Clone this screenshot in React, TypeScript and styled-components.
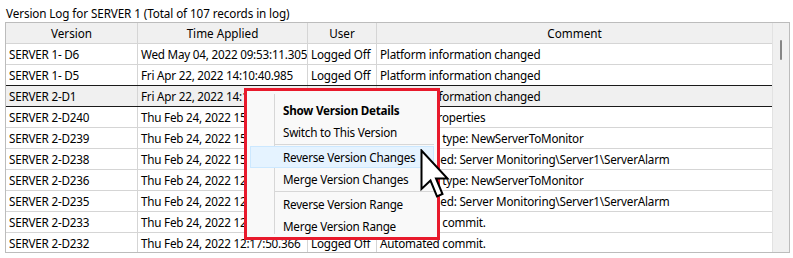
import styled, { createGlobalStyle } from 'styled-components';

const GlobalStyle = createGlobalStyle`
  html, body {
    margin: 0;
    padding: 0;
    background: #ffffff;
  }
  body {
    font-family: 'Noto Sans', 'Open Sans', sans-serif;
    font-size: 11.7px;
    color: #000;
  }
`;

const Page = styled.div`
  position: relative;
  width: 793px;
  height: 258px;
  padding: 5px 3px 0 5px;
  box-sizing: border-box;
  overflow: hidden;
`;

const Title = styled.div`
  height: 17px;
  line-height: 16px;
  padding-left: 1px;
  letter-spacing: -0.1px;
`;

const Frame = styled.div`
  display: grid;
  grid-template-columns: 1fr 17px;
  border: 1px solid #bcbcbc;
  height: 231px;
  box-sizing: border-box;
`;

const Grid = styled.div`
  display: flex;
  flex-direction: column;
  overflow: hidden;
`;

const cols = '132px 170px 69px 1fr';

const HeaderRow = styled.div`
  display: grid;
  grid-template-columns: ${cols};
  height: 21px;
  flex-shrink: 0;
  background: #f0f0f0;
  border-bottom: 1px solid #d5d5d5;
  box-sizing: border-box;
`;

const HeaderCell = styled.div`
  text-align: center;
  line-height: 20px;
  border-right: 1px solid #d5d5d5;
  &:last-child {
    border-right: none;
  }
`;

const Row = styled.div<{ $selected?: boolean; $above?: boolean }>`
  display: grid;
  grid-template-columns: ${cols};
  height: 21px;
  box-sizing: border-box;
  flex-shrink: 0;
  background: ${(p) => (p.$selected ? '#f0f0f0' : '#ffffff')};
  border-bottom: 1px solid ${(p) => (p.$selected || p.$above ? '#1a1a1a' : '#d5d5d5')};
`;

const Cell = styled.div`
  line-height: 20px;
  padding-left: 3px;
  white-space: nowrap;
  overflow: hidden;
  border-right: 1px solid #d5d5d5;
  letter-spacing: -0.22px;
  &:last-child {
    border-right: none;
  }
`;

const ScrollTrack = styled.div`
  background: #f0f0f0;
  border-left: 1px solid #e2e2e2;
  display: flex;
  justify-content: center;
  align-items: flex-start;
  padding-top: 17px;
  box-sizing: border-box;
`;

const Thumb = styled.div`
  width: 2px;
  height: 20px;
  background: #858585;
  border-radius: 1px;
`;

const MenuFrame = styled.div`
  position: absolute;
  left: 244px;
  top: 88px;
  width: 196px;
  border: 3px solid #e81a2c;
  box-sizing: border-box;
  background: #f9f9f9;
`;

const MenuList = styled.div`
  position: relative;
  display: flex;
  flex-direction: column;
  align-items: stretch;
  padding: 8px 3px 0 3px;
  &::before {
    content: '';
    position: absolute;
    left: 27px;
    top: 3px;
    bottom: 3px;
    width: 1px;
    background: #d7d7d7;
  }
`;

const Item = styled.div<{ $bold?: boolean; $hover?: boolean }>`
  position: relative;
  flex-shrink: 0;
  height: 22px;
  line-height: 20px;
  padding: 0 0 0 32px;
  text-align: left;
  font-weight: ${(p) => (p.$bold ? 700 : 400)};
  background: ${(p) => (p.$hover ? '#e5f3ff' : 'transparent')};
  border: 1px solid ${(p) => (p.$hover ? '#cce8ff' : 'transparent')};
  box-sizing: border-box;
  white-space: nowrap;
  letter-spacing: -0.25px;
`;

const Separator = styled.div`
  flex-shrink: 0;
  height: 1px;
  margin: 1px 0 1px 25px;
  background: #d7d7d7;
`;

const Pointer = styled.svg`
  position: absolute;
  left: 420px;
  top: 149px;
`;

const rows = [
  ['SERVER 1- D6', 'Wed May 04, 2022 09:53:11.305', 'Logged Off', 'Platform information changed'],
  ['SERVER 1- D5', 'Fri Apr 22, 2022 14:10:40.985', 'Logged Off', 'Platform information changed'],
  ['SERVER 2-D1', 'Fri Apr 22, 2022 14:10:34.940', 'Logged Off', 'Platform information changed'],
  ['SERVER 2-D240', 'Thu Feb 24, 2022 15:01:22.110', 'Logged Off', 'Changed properties'],
  ['SERVER 2-D239', 'Thu Feb 24, 2022 15:00:48.421', 'Logged Off', 'Added new type: NewServerToMonitor'],
  ['SERVER 2-D238', 'Thu Feb 24, 2022 15:00:12.733', 'Logged Off', 'Item changed: Server Monitoring\\Server1\\ServerAlarm'],
  ['SERVER 2-D236', 'Thu Feb 24, 2022 12:40:05.215', 'Logged Off', 'Added new type: NewServerToMonitor'],
  ['SERVER 2-D235', 'Thu Feb 24, 2022 12:39:41.871', 'Logged Off', 'Item changed: Server Monitoring\\Server1\\ServerAlarm'],
  ['SERVER 2-D233', 'Thu Feb 24, 2022 12:18:02.540', 'Logged Off', 'Automated commit.'],
  ['SERVER 2-D232', 'Thu Feb 24, 2022 12:17:50.366', 'Logged Off', 'Automated commit.'],
];

// null marks a separator line
const menu: ({ label: string; bold?: boolean; hover?: boolean } | null)[] = [
  { label: 'Show Version Details', bold: true },
  { label: 'Switch to This Version' },
  null,
  { label: 'Reverse Version Changes', hover: true },
  { label: 'Merge Version Changes' },
  null,
  { label: 'Reverse Version Range' },
  { label: 'Merge Version Range' },
];

const App = () => {
  return (
    <Page>
      <GlobalStyle />
      <Title>Version Log for SERVER 1 (Total of 107 records in log)</Title>
      <Frame>
        <Grid>
          <HeaderRow>
            <HeaderCell>Version</HeaderCell>
            <HeaderCell>Time Applied</HeaderCell>
            <HeaderCell>User</HeaderCell>
            <HeaderCell>Comment</HeaderCell>
          </HeaderRow>
          {rows.map((r, i) => (
            <Row key={r[0]} $selected={i === 2} $above={i === 1}>
              {r.map((c, j) => (
                <Cell key={j}>{c}</Cell>
              ))}
            </Row>
          ))}
        </Grid>
        <ScrollTrack>
          <Thumb />
        </ScrollTrack>
      </Frame>

      <MenuFrame>
        <MenuList>
          {menu.map((m, i) =>
            m ? (
              <Item key={i} $bold={m.bold} $hover={m.hover}>
                {m.label}
              </Item>
            ) : (
              <Separator key={i} />
            )
          )}
        </MenuList>
      </MenuFrame>

      <Pointer width="30" height="52" viewBox="0 0 30 52">
        <path
          d="M1.5 1.5 L1.5 40 L10.5 31.5 L17 47.5 L22.5 45 L16 29.5 L27.5 29.5 Z"
          fill="#ffffff"
          stroke="#000000"
          strokeWidth="2"
          strokeLinejoin="miter"
        />
      </Pointer>
    </Page>
  );
};

export default App;
